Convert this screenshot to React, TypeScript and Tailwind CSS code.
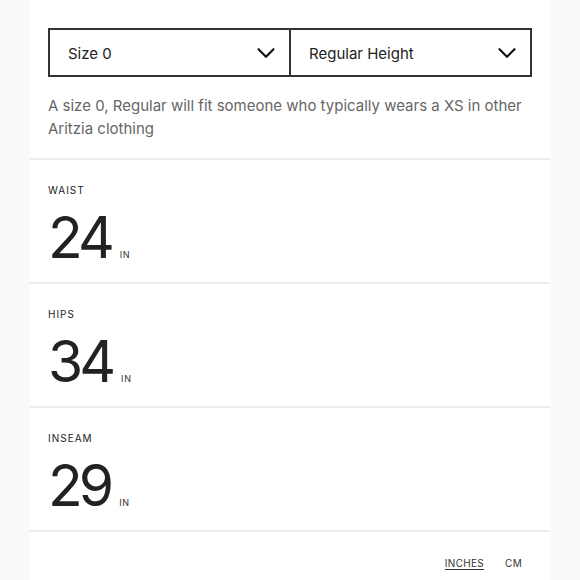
import { ChevronDown } from 'lucide-react'

const MEASURES = [
  { label: 'WAIST', value: '24' },
  { label: 'HIPS', value: '34' },
  { label: 'INSEAM', value: '29' },
]

function Select({ text, first }: { text: string; first?: boolean }) {
  return (
    <div className={`flex-1 h-full flex items-center justify-between pl-[18px] pr-[8px] pt-[3px] ${first ? 'border-r-2 border-[#333]' : ''}`}>
      <span className="text-[15px] text-[#222]">{text}</span>
      <ChevronDown size={30} strokeWidth={1.7} className="text-[#111] -mt-[2px]" />
    </div>
  )
}

export default function App() {
  return (
    <div className="w-[580px] h-[580px] bg-[#fafafa] overflow-hidden" style={{ fontFamily: 'Inter, "Liberation Sans", sans-serif' }}>
      <div className="mx-[30px] bg-white h-full">
        <div className="px-[18px] pt-[28px]">
          <div className="flex h-[49px] border-2 border-[#333]">
            <Select text="Size 0" first />
            <Select text="Regular Height" />
          </div>
          <p className="mt-[17px] text-[15px] leading-[23px] text-[#666] pb-[18px]">
            A size 0, Regular will fit someone who typically wears a XS in other Aritzia clothing
          </p>
        </div>

        {MEASURES.map(m => (
          <div key={m.label} className="border-t-2 border-[#ececec] h-[124px] px-[18px] pt-[24px]">
            <p className="text-[10px] tracking-[0.1em] text-[#222] leading-[12px]">{m.label}</p>
            <div className="flex items-end mt-[15px]">
              <span className="text-[57px] leading-[54px] text-[#222] tracking-[-0.07em]">{m.value}</span>
              <span className="text-[9px] tracking-[0.08em] text-[#333] ml-[9px] mb-[5px] leading-[10px]">IN</span>
            </div>
          </div>
        ))}

        <div className="border-t-2 border-[#ececec] flex justify-end gap-[21px] pr-[28px] pt-[24px] text-[10px] tracking-[0.03em] text-[#333]">
          <span className="underline underline-offset-2">INCHES</span>
          <span>CM</span>
        </div>
      </div>
    </div>
  )
}
